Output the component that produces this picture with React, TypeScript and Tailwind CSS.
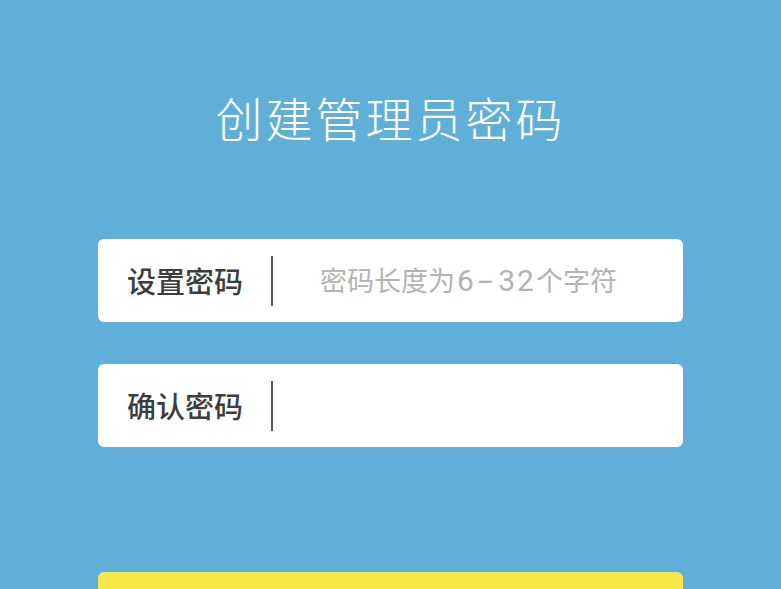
export default function App() {
  const font = { fontFamily: '"Noto Sans CJK SC", "Noto Sans", sans-serif' };
  return (
    <div
      className="w-[781px] h-[589px] overflow-hidden bg-[#60afd8] flex flex-col items-center"
      style={font}
    >
      <div className="w-full h-[2px] bg-[#58a6cf]" />
      <h1 className="mt-[93px] h-[68px] flex items-center text-[47px] font-light text-white tracking-[3px] leading-none">
        创建管理员密码
      </h1>
      <div className="mt-[99px] w-[585px] flex flex-col gap-[42px]">
        <div className="h-[83px] bg-white rounded-[6px] flex items-center pl-[29px]">
          <span className="text-[29px] font-medium text-[#3d3d3d] leading-none w-[116px]">设置密码</span>
          <div className="ml-[28px] w-[2px] h-[50px] bg-[#5a5a5a]" />
          <span className="ml-[47px] text-[27px] text-[#b3b3b3] leading-none flex items-baseline">
            <span>密码长度为</span>
            <span className="ml-[2px] text-[30px] tracking-[2px] font-['Roboto',sans-serif]">
              6<span className="inline-block scale-x-[1.8] mx-[6px]">-</span>32
            </span>
            <span>个字符</span>
          </span>
        </div>
        <div className="h-[83px] bg-white rounded-[6px] flex items-center pl-[29px]">
          <span className="text-[29px] font-medium text-[#3d3d3d] leading-none w-[116px]">确认密码</span>
          <div className="ml-[28px] w-[2px] h-[50px] bg-[#5a5a5a]" />
        </div>
      </div>
      <div className="mt-[125px] w-[585px] h-[60px] shrink-0 bg-[#f7e847] rounded-[6px]" />
    </div>
  );
}
